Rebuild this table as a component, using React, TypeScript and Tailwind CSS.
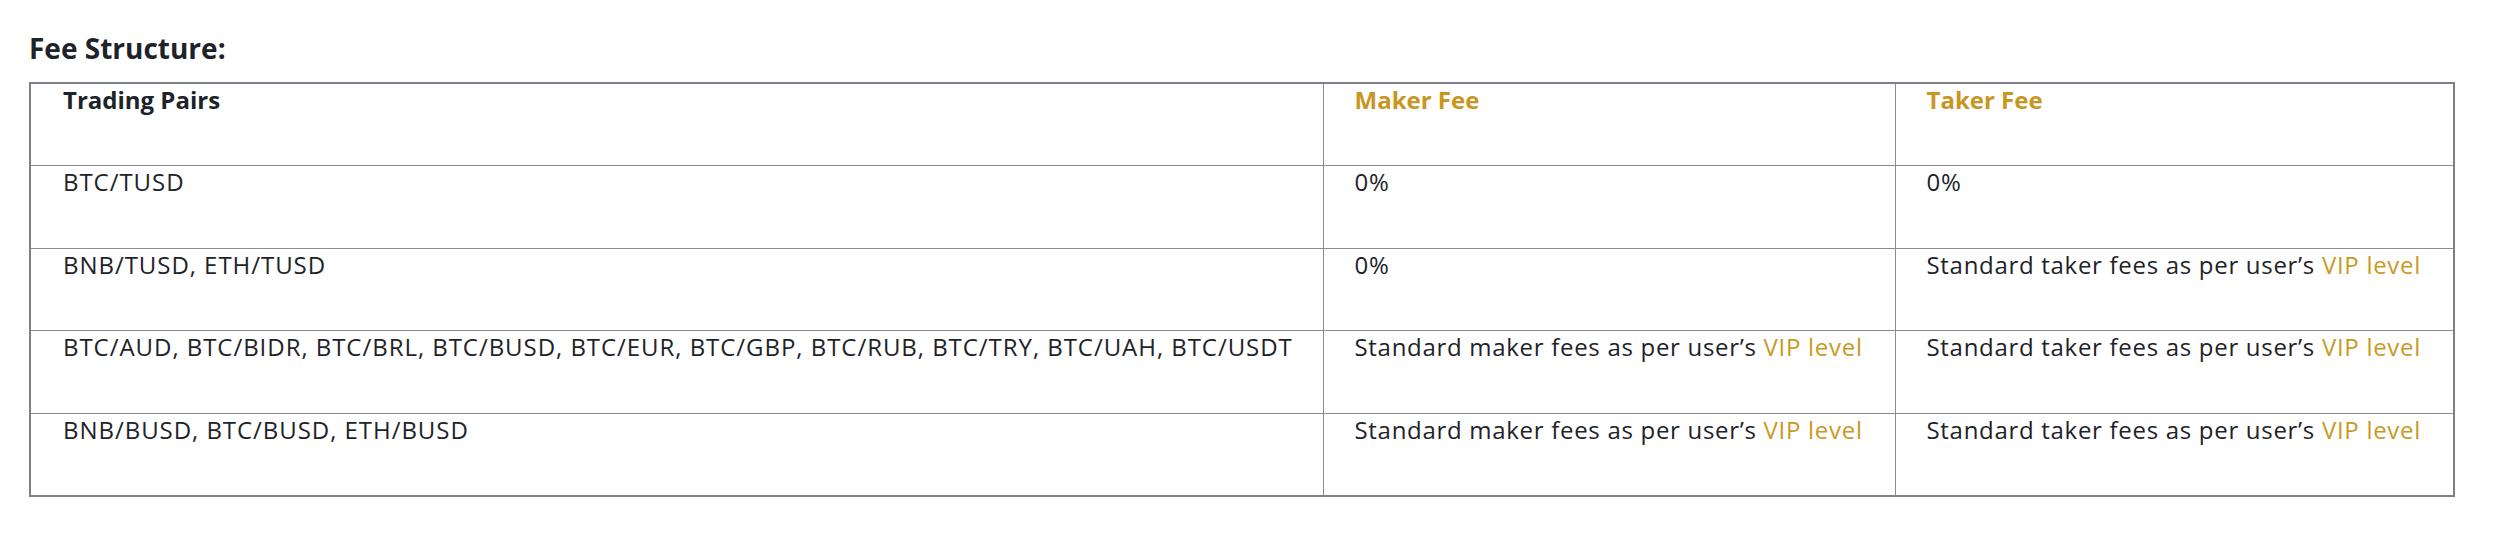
import React from 'react';

type Fee = { text: string; vip?: boolean };

interface Row {
  pairs: string;
  maker: Fee;
  taker: Fee;
}

const rows: Row[] = [
  { pairs: 'BTC/TUSD', maker: { text: '0%' }, taker: { text: '0%' } },
  {
    pairs: 'BNB/TUSD, ETH/TUSD',
    maker: { text: '0%' },
    taker: { text: 'Standard taker fees as per user’s ', vip: true },
  },
  {
    pairs: 'BTC/AUD, BTC/BIDR, BTC/BRL, BTC/BUSD, BTC/EUR, BTC/GBP, BTC/RUB, BTC/TRY, BTC/UAH, BTC/USDT',
    maker: { text: 'Standard maker fees as per user’s ', vip: true },
    taker: { text: 'Standard taker fees as per user’s ', vip: true },
  },
  {
    pairs: 'BNB/BUSD, BTC/BUSD, ETH/BUSD',
    maker: { text: 'Standard maker fees as per user’s ', vip: true },
    taker: { text: 'Standard taker fees as per user’s ', vip: true },
  },
];

function FeeCell({ fee }: { fee: Fee }) {
  return (
    <td className="h-[82.6px] border border-[#8a8c90] pl-[31px] pr-1 align-top leading-[31px] tracking-[0.7px]">
      {fee.text}
      {fee.vip && <span className="text-[#c99a1f]">VIP level</span>}
    </td>
  );
}

export default function App() {
  return (
    <div className="min-h-screen bg-white pl-[29px] pt-[30px] text-[24px] text-[#1e2329] font-['Open_Sans','Noto_Sans',sans-serif]">
      <h2 className="mb-[16px] text-[28px] font-bold leading-[36px]">Fee Structure:</h2>
      <table className="w-[2424px] table-fixed border-collapse border-2 border-[#7d8089]">
        <colgroup>
          <col className="w-[1293px]" />
          <col className="w-[572px]" />
          <col className="w-[559px]" />
        </colgroup>
        <thead>
          <tr>
            <th className="h-[82.6px] border border-[#8a8c90] pl-[32px] text-left align-top font-bold leading-[31px]">
              Trading Pairs
            </th>
            <th className="h-[82.6px] border border-[#8a8c90] pl-[31px] text-left align-top font-bold leading-[31px] text-[#c8961f]">
              Maker Fee
            </th>
            <th className="h-[82.6px] border border-[#8a8c90] pl-[31px] text-left align-top font-bold leading-[31px] text-[#c8961f]">
              Taker Fee
            </th>
          </tr>
        </thead>
        <tbody>
          {rows.map((row) => (
            <tr key={row.pairs}>
              <td className="h-[82.6px] border border-[#8a8c90] pl-[32px] align-top leading-[31px] tracking-[0.95px]">
                {row.pairs}
              </td>
              <FeeCell fee={row.maker} />
              <FeeCell fee={row.taker} />
            </tr>
          ))}
        </tbody>
      </table>
    </div>
  );
}
